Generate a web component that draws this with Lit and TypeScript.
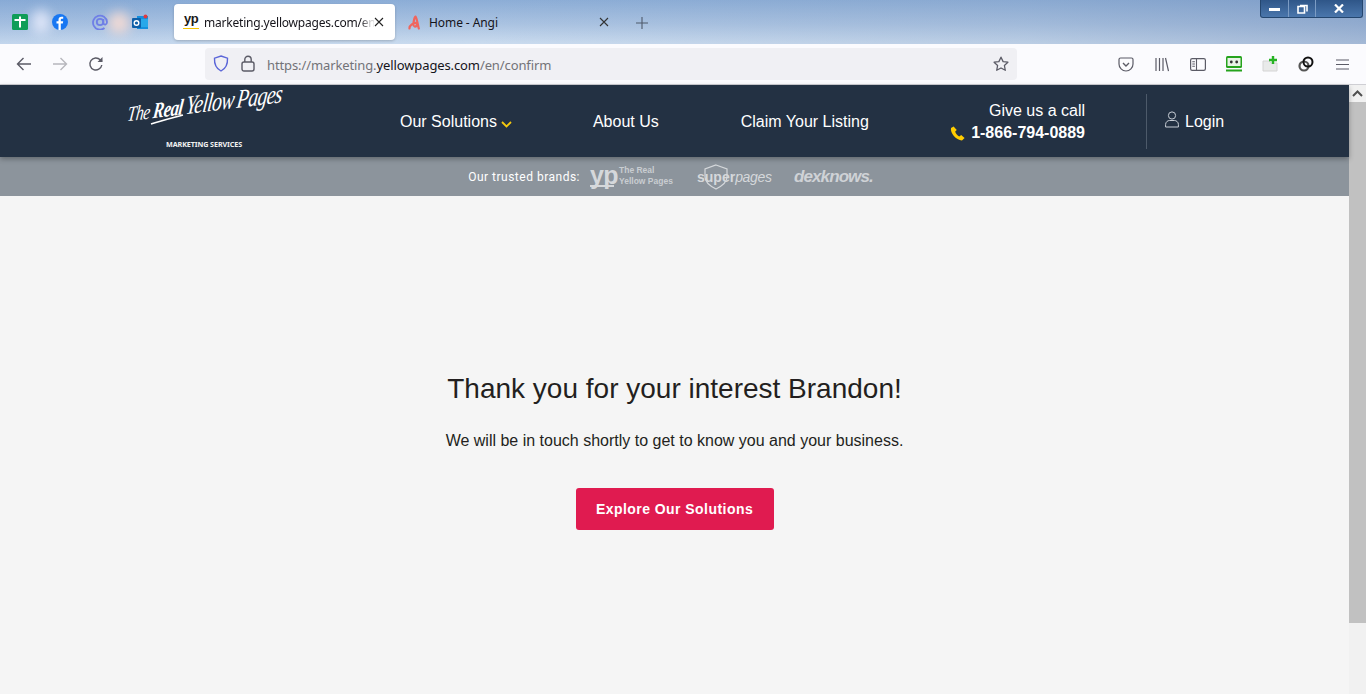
import { LitElement, html, css, svg } from "lit";
import { customElement } from "lit/decorators.js";

const ic = (w: number, h: number, body: unknown, vb = `0 0 ${w} ${h}`) =>
  html`<svg width=${w} height=${h} viewBox=${vb} fill="none">${body}</svg>`;

const S = `#5b5b66`;

@customElement("app-root")
export class AppRoot extends LitElement {
  static styles = css`
    :host { display: block; height: 694px; overflow: hidden; background: #f5f5f5; font-family: "Liberation Sans", Arial, sans-serif; position: relative; }
    svg { display: block; flex: none; }
    .tabbar { height: 44px; position: relative; overflow: hidden; display: flex; align-items: flex-start; background: linear-gradient(180deg, #86a9d4 0%, #a6c0e0 55%, #c8daee 100%); }
    .tabbar::before { content: ""; position: absolute; inset: 0; background: linear-gradient(90deg, rgba(150,180,225,.1) 0%, rgba(255,255,255,.05) 35%, rgba(150,170,200,.25) 75%, rgba(120,145,185,.45) 100%); }
    .tabbar > * { position: relative; }
    .blur { position: absolute !important; border-radius: 50%; filter: blur(6px); }
    .b1 { left: 32px; top: 10px; width: 18px; height: 24px; background: #dfe6f8; }
    .b2 { left: 108px; top: 12px; width: 22px; height: 22px; background: #f0d9d4; }
    .favs { width: 174px; height: 44px; flex: none; display: flex; align-items: center; padding-left: 12px; box-sizing: border-box; }
    .favs .fb { margin-left: 24px; }
    .favs .at { margin-left: 24px; }
    .favs .ol { margin-left: 24px; }
    .tab { height: 36px; margin-top: 4px; flex: none; box-sizing: border-box; display: flex; align-items: center; font: 12px "Noto Sans", sans-serif; color: #15141a; }
    .tab.active { width: 221px; background: #fff; border-radius: 4px; box-shadow: 0 1px 3px rgba(0,0,0,.2); padding-left: 9px; }
    .tab.other { width: 226px; padding-left: 13px; }
    .tab .label { white-space: nowrap; }
    .tab.active .label { width: 170px; margin-left: 5px; letter-spacing: -.2px; -webkit-mask-image: linear-gradient(90deg, #000 92%, rgba(0,0,0,.2) 98%); mask-image: linear-gradient(90deg, #000 92%, rgba(0,0,0,.2) 98%); }
    .tab.other .label { width: 170px; margin-left: 9px; letter-spacing: -.08px; }
    .ypfav { width: 16px; height: 16px; flex: none; font: 700 13px/11px "Liberation Sans", sans-serif; letter-spacing: -.5px; color: #1a1a1a; border-bottom: 1.5px solid #f5c400; box-sizing: border-box; text-align: center; margin-top: -3px; }
    .plus { margin: 17px 0 0 15px; }
    .winctl { position: absolute !important; left: 1260px; top: 0; width: 103px; height: 18px; display: flex; background: linear-gradient(180deg, #2f5688, #4a76ac); border: 1px solid #24466f; border-top: 0; border-radius: 0 0 3px 3px; box-sizing: border-box; }
    .winctl div { display: flex; align-items: center; justify-content: center; border-right: 1px solid #7c9cc4; height: 100%; box-sizing: border-box; }
    .winctl div:last-child { border: 0; }
    .w1 { width: 28px; } .w2 { width: 27px; } .w3 { flex: 1; }
    .toolbar { height: 41px; background: #fbfbfe; border-bottom: 1px solid #cfcfd4; box-sizing: border-box; display: flex; align-items: center; position: relative; }
    .nav-btns { display: flex; align-items: center; width: 205px; padding-left: 16px; box-sizing: border-box; gap: 20px; flex: none; }
    .urlbar { width: 812px; height: 32px; background: #f0f0f4; border-radius: 4px; display: flex; align-items: center; flex: none; padding-left: 8px; box-sizing: border-box; margin-top: -1px; }
    .lock { margin-left: 12px; }
    .url { margin-left: 12px; margin-top: 2px; font: 13px "Noto Sans", sans-serif; color: #737378; white-space: nowrap; letter-spacing: -.11px; }
    .url b { font-weight: 400; color: #15141a; }
    .star { margin-left: auto; margin-right: 8px; }
    .tools { display: flex; align-items: center; margin-left: 91px; }
    .tools > span { width: 36px; display: flex; justify-content: center; }
    .page { display: flex; height: 610px; }
    .main { width: 1349px; flex: none; display: flex; flex-direction: column; height: 610px; }
    .head { height: 72px; background: #233143; display: flex; color: #fff; font-size: 16px; position: relative; z-index: 2; box-shadow: 0 2px 5px rgba(0,0,0,.3); align-items: center; }
    .logo { width: 274px; flex: none; height: 72px; position: relative; }
    .script { position: absolute; left: 126px; top: 20px; white-space: nowrap; font: italic 16px "Liberation Serif", serif; transform: rotate(-7deg) skewX(-14deg) scaleY(1.3); transform-origin: left bottom; letter-spacing: -.5px; display: flex; align-items: baseline; gap: 3px; }
    .script b { font-size: 17px; }
    .script .big { font-size: 20px; letter-spacing: -.7px; }
    .swoosh { position: absolute; left: 150px; top: 28px; }
    .ms { position: absolute; left: 166px; top: 54px; font: 700 7.2px "Noto Sans", sans-serif; letter-spacing: -.1px; white-space: nowrap; color: #f2f2f2; }
    .links { display: flex; align-items: center; padding-left: 126px; width: 636px; box-sizing: border-box; flex: none; margin-top: 2px; }
    .links a { white-space: nowrap; }
    .sol { display: flex; align-items: center; gap: 4px; }
    .sol svg { margin-top: 5px; }
    .about { margin-left: 81px; }
    .claim { margin-left: 82px; }
    .call { width: 175px; flex: none; text-align: right; line-height: 21px; margin-top: 2px; }
    .call .num { font-weight: 700; display: flex; justify-content: flex-end; align-items: center; gap: 6px; line-height: 22px; margin-top: 1px; }
    .sep { width: 1px; height: 55px; background: #4d5a6a; margin-left: 61px; flex: none; margin-top: 1px; }
    .login { display: flex; align-items: center; gap: 6px; margin-left: 18px; margin-top: 2px; }
    .login svg { margin-top: -5px; }
    .brands { height: 39px; background: #8c949c; display: flex; align-items: center; justify-content: center; box-sizing: border-box; color: #fff; flex: none; }
    .brands .t { font: 12px "Roboto", sans-serif; letter-spacing: .5px; margin: 1px 10px 0 2px; white-space: nowrap; }
    .yp { display: flex; align-items: flex-start; color: #d5d8db; width: 84px; flex: none; }
    .yp .m { font: 700 25px/19px "Liberation Sans", sans-serif; letter-spacing: -.6px; border-bottom: 2px solid #d5d8db; height: 19px; width: 24px; overflow: visible; }
    .yp .s { font: 700 8.5px/11px "Liberation Sans", sans-serif; margin-left: 5px; margin-top: -1px; color: #c9cdd1; white-space: nowrap; }
    .sp { width: 77px; height: 26px; flex: none; margin-left: 23px; position: relative; color: #d5d8db; white-space: nowrap; display: flex; align-items: center; }
    .sp svg { position: absolute; left: 6px; top: 0; }
    .sp .a { font: 700 14px "Liberation Sans", sans-serif; position: relative; }
    .sp .c { font: italic 14px "Liberation Sans", sans-serif; position: relative; letter-spacing: -.3px; }
    .dx { margin-left: 20px; font: italic 700 17px "Liberation Sans", sans-serif; color: #cfd2d6; letter-spacing: -.9px; margin-right: 10px; white-space: nowrap; }
    .body { flex: 1; display: flex; flex-direction: column; align-items: center; padding-top: 176px; }
    h1 { margin: 0; font: 400 28px/34px "Liberation Sans", sans-serif; color: #231f20; white-space: nowrap; }
    p { margin: 25px 0 0; font: 16px/20px "Liberation Sans", sans-serif; color: #231f20; white-space: nowrap; }
    .btn { margin-top: 37px; width: 198px; height: 42px; background: #e01b50; color: #fff; border-radius: 3px; font: 700 14px/43px "Liberation Sans", sans-serif; text-align: center; letter-spacing: .45px; }
    .sb { width: 17px; flex: none; background: #f1f1f1; display: flex; flex-direction: column; }
    .sb .up { height: 17px; display: flex; align-items: center; justify-content: center; background: #f1f1f1; }
    .sb .th { height: 521px; background: #c1c1c1; }
  `;

  render() {
    return html`
      <div class="tabbar">
        <div class="blur b1"></div><div class="blur b2"></div>
        <div class="favs">
          ${ic(16, 16, svg`<rect width="16" height="16" rx="1.500" fill="#0f9d58"/><path d="M2.500 6h11M8 2.500v11" stroke="#fff" stroke-width="2"/>`)}
          <span class="fb">${ic(16, 16, svg`<circle cx="8" cy="8" r="8" fill="#1877f2"/><path d="M8.800 16V9.600h2l.4-2.300H8.800V6c0-.7.3-1.200 1.300-1.200h1.100v-2c-.4 0-1-.1-1.700-.1-1.900 0-3 1.100-3 3v1.600h-2v2.300h2V16z" fill="#fff"/>`)}</span>
          <span class="at">${ic(16, 16, svg`<path d="M12.500 14A7 7 0 1 1 15 8c0 3-3.200 3.500-3.600 1V5" stroke="#6f7fe6" stroke-width="1.800"/><circle cx="8" cy="8" r="3.200" stroke="#6f7fe6" stroke-width="1.800"/>`)}</span>
          <span class="ol">${ic(16, 16, svg`<rect x="5" y="2" width="11" height="13" fill="#1490df"/><rect x="8" y="5" width="8" height="8" fill="#28a8ea"/><rect y="4" width="9" height="10" rx="1" fill="#0f5fa8"/><circle cx="4.500" cy="9" r="2.300" stroke="#fff" stroke-width="1.400"/><circle cx="13.500" cy="2.500" r="2" fill="#e0393e"/>`)}</span>
        </div>
        <div class="tab active">
          <div class="ypfav">yp</div>
          <span class="label">marketing.yellowpages.com/en</span>
          ${ic(10, 10, svg`<path d="M1 1l8 8M9 1l-8 8" stroke="#222" stroke-width="1.100"/>`)}
        </div>
        <div class="tab other">
          ${ic(12, 15, svg`<path d="M1.500 13.500C1 10.500 6 7.500 8 8c1.500.4 1 4-1.500 3.500C4 11 6.500 2 7.500 1.500 9 3 9.500 9 10.800 13.500" stroke="#f0655d" stroke-width="2.200" stroke-linecap="round" stroke-linejoin="round"/>`)}
          <span class="label">Home - Angi</span>
          ${ic(10, 10, svg`<path d="M1 1l8 8M9 1l-8 8" stroke="#333" stroke-width="1.100"/>`)}
        </div>
        <div class="plus">${ic(12, 12, svg`<path d="M6 0v12M0 6h12" stroke="#4f5a6b" stroke-width="1.100"/>`)}</div>
        <div class="winctl">
          <div class="w1">${ic(11, 4, svg`<rect width="11" height="3" y="1" fill="#fff"/>`)}</div>
          <div class="w2">${ic(11, 11, svg`<path d="M3 2.500h7v6M1 3.500h6.500V10H1z" stroke="#fff" stroke-width="1.600"/>`)}</div>
          <div class="w3">${ic(10, 9, svg`<path d="M1 .5l8 8M9 .5l-8 8" stroke="#fff" stroke-width="2.200"/>`)}</div>
        </div>
      </div>
      <div class="toolbar">
        <div class="nav-btns">
          ${ic(16, 14, svg`<path d="M15 7H1.500M7.500 1l-6 6 6 6" stroke="${S}" stroke-width="1.400"/>`)}
          ${ic(16, 14, svg`<path d="M1 7h13.500M8.500 1l6 6-6 6" stroke="#b7b7bd" stroke-width="1.400"/>`)}
          ${ic(16, 16, svg`<path d="M13.800 9a6 6 0 1 1-1.600-5.200L14 5.500" stroke="${S}" stroke-width="1.400"/><path d="M14.500 1v5h-5z" fill="${S}"/>`)}
        </div>
        <div class="urlbar">
          ${ic(16, 17, svg`<path d="M8 1l6.500 2.200c.3 6-1.800 10.400-6.500 12.800C3.300 13.600 1.200 9.200 1.500 3.200z" stroke="#5a65d8" stroke-width="1.400"/>`)}
          <span class="lock">${ic(14, 17, svg`<rect x="1" y="7" width="12" height="9" rx="2" stroke="${S}" stroke-width="1.400"/><path d="M3.800 7V4.500a3.200 3.200 0 0 1 6.400 0V7" stroke="${S}" stroke-width="1.400"/>`)}</span>
          <span class="url">https://marketing.<b>yellowpages.com</b>/en/confirm</span>
          <span class="star">${ic(16, 16, svg`<path d="M8 1.200l2.100 4.400 4.800.6-3.500 3.300.9 4.800L8 12l-4.300 2.300.9-4.800L1.100 6.200l4.800-.6z" stroke="${S}" stroke-width="1.300" stroke-linejoin="round"/>`)}</span>
        </div>
        <div class="tools">
          <span>${ic(16, 15, svg`<path d="M1 2.500a1.500 1.500 0 0 1 1.500-1.500h11A1.500 1.500 0 0 1 15 2.500V7a7 7 0 0 1-14 0z" stroke="${S}" stroke-width="1.200"/><path d="M5 6l3 3 3-3" stroke="${S}" stroke-width="1.400"/>`)}</span>
          <span>${ic(14, 15, svg`<path d="M1 1v13M4.500 1v13M8 1v13M10.500 1l3 13" stroke="${S}" stroke-width="1.200"/>`)}</span>
          <span>${ic(16, 13, svg`<rect x=".6" y=".6" width="14.800" height="11.800" rx="1.600" stroke="${S}" stroke-width="1.200"/><path d="M6.500 1v11M2.300 3.800h2.600M2.300 6h2.600M2.300 8.200h2.600" stroke="${S}" stroke-width="1.100"/>`)}</span>
          <span>${ic(16, 16, svg`<rect y="0" width="16" height="12" rx="1.500" fill="#26a31d"/><rect x="1.500" y="2" width="13" height="8" fill="#e8f3e6"/><circle cx="5.300" cy="6" r="1.400" fill="#333"/><circle cx="10.700" cy="6" r="1.400" fill="#333"/><rect y="13.500" width="16" height="2" fill="#26a31d"/>`)}</span>
          <span>${ic(16, 16, svg`<path d="M1 5h6l2 2h6v8H1z" fill="#e9eaea" stroke="#d4d4d4"/><path d="M11 0v8M7 4h8" stroke="#27b324" stroke-width="2.400"/>`)}</span>
          <span>${ic(16, 16, svg`<circle cx="6" cy="10" r="4.500" stroke="#555" stroke-width="2.200"/><circle cx="10" cy="6" r="4.500" stroke="#111" stroke-width="2"/>`)}</span>
          <span>${ic(13, 11, svg`<path d="M0 1h13M0 5.500h13M0 10h13" stroke="${S}" stroke-width="1.200"/>`)}</span>
        </div>
      </div>
      <div class="page">
        <div class="main">
          <div class="head">
            <div class="logo">
              <div class="script"><span>The</span><b>Real</b><span class="big">Yellow</span><span class="big">Pages</span></div>
              <svg class="swoosh" width="34" height="12" viewBox="0 0 34 12"><path d="M1 11C10 8 22 5 33 2" stroke="#fff" stroke-width="1.600"/></svg>
              <div class="ms">MARKETING SERVICES</div>
            </div>
            <div class="links">
              <a class="sol">Our Solutions ${ic(11, 7, svg`<path d="M1 1l4.500 4.500L10 1" stroke="#f6c90e" stroke-width="1.800"/>`)}</a>
              <a class="about">About Us</a>
              <a class="claim">Claim Your Listing</a>
            </div>
            <div class="call">
              <div>Give us a call</div>
              <div class="num">${ic(15, 15, svg`<path d="M3.600.4 1 2c-1 5 5 12 11 12.600l2.600-2.500-3.400-3-2 1.300C7.200 9.600 5.600 7.400 5.200 5.600L6.800 4z" fill="#ffcc00"/>`)}<span>1-866-794-0889</span></div>
            </div>
            <div class="sep"></div>
            <a class="login">${ic(14, 17, svg`<circle cx="7" cy="4.500" r="3.600" stroke="#c8ced6" stroke-width="1"/><path d="M.6 16v-2.500c0-2.500 2-4 4-4h4.800c2 0 4 1.500 4 4V16z" stroke="#c8ced6" stroke-width="1"/>`)}<span>Login</span></a>
          </div>
          <div class="brands">
            <span class="t">Our trusted brands:</span>
            <div class="yp"><div class="m">yp</div><div class="s">The Real<br>Yellow Pages</div></div>
            <div class="sp">
              ${ic(26, 26, svg`<path d="M13 1l11 4v8c0 5-5 9-11 12C7 22 2 18 2 13V5z" stroke="#d5d8db" stroke-width="1.200"/>`)}
              <span class="a">super</span><span class="c">pages</span>
            </div>
            <div class="dx">dexknows.</div>
          </div>
          <div class="body">
            <h1>Thank you for your interest Brandon!</h1>
            <p>We will be in touch shortly to get to know you and your business.</p>
            <div class="btn">Explore Our Solutions</div>
          </div>
        </div>
        <div class="sb">
          <div class="up">${ic(11, 7, svg`<path d="M1 6l4.500-4.500L10 6" stroke="#505050" stroke-width="2"/>`)}</div>
          <div class="th"></div>
        </div>
      </div>
    `;
  }
}
